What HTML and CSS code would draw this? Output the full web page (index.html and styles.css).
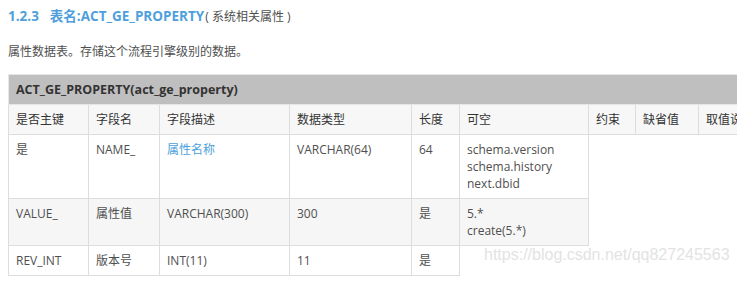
FILE: index.html
```html
<!DOCTYPE html>
<html lang="zh-CN">
<head>
<meta charset="utf-8">
<link rel="stylesheet" href="styles.css">
</head>
<body>
<div class="page">
  <h4 class="heading"><span class="num">1.2.3</span><span class="title">表名:ACT_GE_PROPERTY</span><span class="note">( 系统相关属性 )</span></h4>
  <p class="desc">属性数据表。存储这个流程引擎级别的数据。</p>
  <div class="table-wrap">
    <table class="tbl">
      <colgroup>
        <col class="c1"><col class="c2"><col class="c3"><col class="c4"><col class="c5"><col class="c6"><col class="c7"><col class="c8"><col class="c9">
      </colgroup>
      <tr class="cap"><td colspan="9">ACT_GE_PROPERTY(act_ge_property)</td></tr>
      <tr class="head">
        <td>是否主键</td><td>字段名</td><td>字段描述</td><td>数据类型</td><td>长度</td><td>可空</td><td>约束</td><td>缺省值</td><td>取值说明</td>
      </tr>
      <tr class="row">
        <td>是</td><td>NAME_</td><td class="link">属性名称</td><td>VARCHAR(64)</td><td>64</td><td>schema.version<br>schema.history<br>next.dbid</td>
      </tr>
      <tr class="row alt">
        <td>VALUE_</td><td>属性值</td><td>VARCHAR(300)</td><td>300</td><td>是</td><td>5.*<br>create(5.*)</td>
      </tr>
      <tr class="row">
        <td>REV_INT</td><td>版本号</td><td>INT(11)</td><td>11</td><td>是</td>
      </tr>
    </table>
    <div class="watermark">https://blog.csdn.net/qq827245563</div>
  </div>
</div>
</body>
</html>
```

FILE: styles.css
```css
html, body {
  margin: 0;
  padding: 0;
  background: #fff;
  overflow: hidden;
}
.page {
  padding: 7px 0 0 8px;
  font-family: "Open Sans", "Noto Sans CJK SC", sans-serif;
  color: #4f4f4f;
  font-size: 12px;
}
.heading {
  margin: 0;
  font-size: 13.5px;
  line-height: 18px;
  height: 18px;
  font-weight: bold;
  display: flex;
  align-items: baseline;
}
.num {
  color: #4f9fdc;
  margin-right: 11px;
}
.title {
  color: #4f9fdc;
}
.note {
  color: #4f4f4f;
  font-weight: normal;
  font-size: 12px;
  margin-left: 1px;
  white-space: pre;
}
.desc {
  margin: 18px 0 0 0;
  line-height: 18px;
  font-size: 12px;
}
.table-wrap {
  position: relative;
  margin-top: 13px;
}
.tbl {
  border-collapse: collapse;
  table-layout: fixed;
  width: 790px;
  line-height: 17px;
}
.c1 { width: 80px; }
.c2 { width: 71px; }
.c3 { width: 130px; }
.c4 { width: 122px; }
.c5 { width: 48px; }
.c6 { width: 129px; }
.c7 { width: 47px; }
.c8 { width: 63px; }
.c9 { width: 100px; }
.tbl td {
  border: 1px solid #dddddd;
  padding: 6px 7px;
  vertical-align: top;
  text-align: left;
  white-space: nowrap;
  overflow: hidden;
}
.cap td {
  background: #bfbfbf;
  font-weight: bold;
  font-size: 12.5px;
  color: #333;
  padding: 6px 7px;
  border-color: #e6e6e6;
}
.head td {
  background: #f7f7f7;
  color: #333;
}
.row td {
  background: #fff;
}
.row.alt td {
  background: #f6f6f6;
}
.link {
  color: #4ea1db;
}
.watermark {
  position: absolute;
  left: 476px;
  top: 172px;
  font-family: "Liberation Sans", sans-serif;
  font-size: 16px;
  color: #e3e3e3;
  white-space: nowrap;
}
```
